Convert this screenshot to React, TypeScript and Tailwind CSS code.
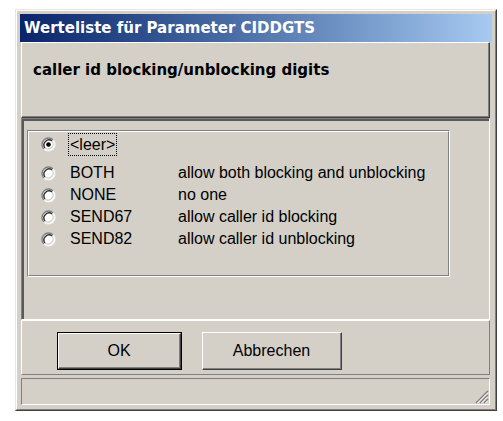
import React from "react";

const items = [
  { key: "<leer>", desc: "" },
  { key: "BOTH", desc: "allow both blocking and unblocking" },
  { key: "NONE", desc: "no one" },
  { key: "SEND67", desc: "allow caller id blocking" },
  { key: "SEND82", desc: "allow caller id unblocking" },
];

function Radio({ checked }: { checked: boolean }) {
  return (
    <svg width="15" height="15" viewBox="0 0 15 15" className="shrink-0">
      <circle cx="7.5" cy="7.5" r="6.5" fill="#ffffff" />
      <path d="M12.1 2.9 A6.5 6.5 0 0 0 2.9 12.1" fill="none" stroke="#808080" strokeWidth="1.4" />
      <path d="M11 4 A5 5 0 0 0 4 11" fill="none" stroke="#303030" strokeWidth="1.4" />
      <path d="M2.9 12.1 A6.5 6.5 0 0 0 12.1 2.9" fill="none" stroke="#f4f4f4" strokeWidth="1.2" />
      <path d="M4 11 A5 5 0 0 0 11 4" fill="none" stroke="#d4d0c8" strokeWidth="1.2" />
      {checked && <circle cx="7.5" cy="7.5" r="2.3" fill="#000000" />}
    </svg>
  );
}

export default function App() {
  return (
    <div className="h-[421px] w-[503px] bg-white pl-[15px] pt-[9px] font-['Liberation_Sans',Arial,sans-serif] text-black">
      {/* window frame */}
      <div className="w-[482px] border border-b-[#404040] border-l-[#e8e6e0] border-r-[#404040] border-t-[#e8e6e0] bg-[#d4d0c8]">
        <div className="border border-b-[#808080] border-l-white border-r-[#808080] border-t-white px-[3px] pb-[4px] pt-[3px]">
          {/* title bar */}
          <div className="flex h-[28px] items-center bg-gradient-to-r from-[#0a246a] to-[#a6caf0] pl-[4px] font-['DejaVu_Sans',sans-serif] text-[15px] font-bold text-white">
            Werteliste für Parameter CIDDGTS
          </div>

          <div className="flex flex-col pl-[1px] pr-[2px]">
            {/* header panel */}
            <div className="h-[76px] border border-b-[#404040] border-l-white border-r-[#404040] border-t-white">
              <div className="h-full border-b border-r border-[#808080] pl-[11px] pt-[16px] font-['DejaVu_Sans',sans-serif] text-[15px] font-bold">
                caller id blocking/unblocking digits
              </div>
            </div>

            {/* main sunken panel */}
            <div className="h-[202px] border border-b-white border-l-[#808080] border-r-white border-t-[#808080]">
              <div className="h-full border-l-2 border-t-2 border-[#5a5a5a] pl-[3px] pr-[39px] pt-[9px]">
                <div className="h-[147px] border border-b-white border-l-[#808080] border-r-white border-t-[#808080]">
                  <div className="h-full border border-b-[#808080] border-l-white border-r-[#808080] border-t-white">
                    {items.map((it, i) => (
                      <div
                        key={it.key}
                        className={`flex h-[22px] items-center pl-[12px] text-[16px] ${i === 0 ? "mb-[5px] h-[25px]" : ""}`}
                      >
                        <Radio checked={i === 0} />
                        <div className="ml-[12px] w-[110px]">
                          {i === 0 ? (
                            <span className="border border-dotted border-black px-[1px] py-[2px]">{it.key}</span>
                          ) : (
                            <span className="pl-[2px]">{it.key}</span>
                          )}
                        </div>
                        <div>{it.desc}</div>
                      </div>
                    ))}
                  </div>
                </div>
              </div>
            </div>

            {/* button panel */}
            <div className="flex h-[55px] gap-[20px] border border-b-[#808080] border-l-white border-r-[#808080] border-t-white pl-[35px] pt-[11px]">
              <button className="h-[38px] w-[125px] border border-black bg-[#d4d0c8]">
                <div className="flex h-full items-center justify-center border border-b-[#404040] border-l-white border-r-[#404040] border-t-white text-[16px]">
                  <div className="flex h-full w-full items-center justify-center border-b border-r border-[#808080]">OK</div>
                </div>
              </button>
              <button className="h-[38px] w-[140px] border border-b-[#404040] border-l-white border-r-[#404040] border-t-white bg-[#d4d0c8]">
                <div className="flex h-full w-full items-center justify-center border-b border-r border-[#808080] text-[16px]">
                  Abbrechen
                </div>
              </button>
            </div>

            {/* status bar */}
            <div className="relative mt-[3px] h-[27px] border border-b-white border-l-[#808080] border-r-white border-t-[#808080]">
              <svg width="15" height="15" viewBox="0 0 15 15" className="absolute bottom-0 right-0">
                <path d="M14 2 L2 14 M14 6 L6 14 M14 10 L10 14" stroke="#808080" strokeWidth="1.5" />
                <path d="M14 3.5 L3.5 14 M14 7.5 L7.5 14 M14 11.5 L11.5 14" stroke="#ffffff" strokeWidth="1" />
              </svg>
            </div>
          </div>
        </div>
      </div>
    </div>
  );
}
